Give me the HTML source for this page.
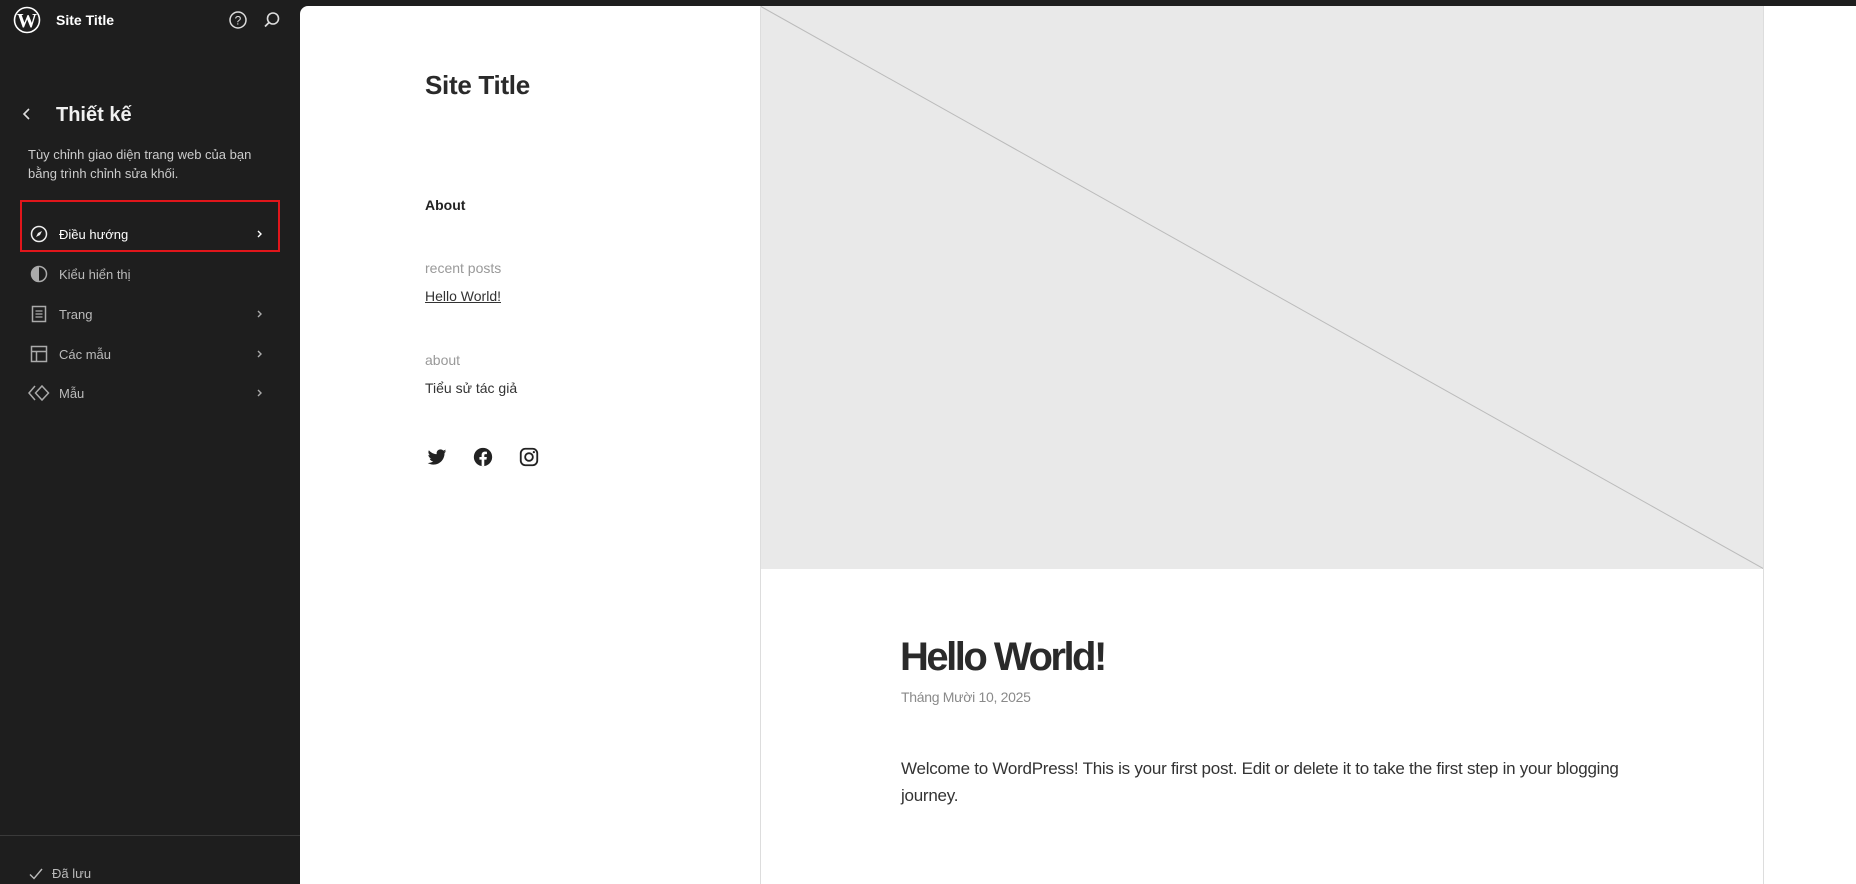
<!DOCTYPE html>
<html><head><meta charset="utf-8"><style>
*{margin:0;padding:0;box-sizing:border-box}
body{width:1856px;height:884px;overflow:hidden;background:#1e1e1e;font-family:"Liberation Sans","Noto Sans CJK SC",sans-serif;position:relative}
.a{position:absolute;white-space:nowrap;line-height:20px}
.frame{position:absolute;left:300px;top:6px;width:1556px;height:878px;background:#fff;border-top-left-radius:8px;overflow:hidden}
.mi{font-size:13px;color:#bbb}
.chev{position:absolute;left:255px}
</style></head><body>
<svg class="a" style="left:13px;top:6px" width="28" height="28" viewBox="0 0 28 28"><circle cx="14" cy="14" r="12.5" fill="none" stroke="#fff" stroke-width="1.6"/><text x="14" y="21" text-anchor="middle" font-family="Liberation Serif" font-weight="bold" font-size="20" fill="#fff">W</text></svg>
<div class="a" style="left:56px;top:10px;font-size:14px;font-weight:bold;color:#fff">Site Title</div>
<svg class="a" style="left:228px;top:10px" width="20" height="20" viewBox="0 0 20 20"><circle cx="10" cy="10" r="8" fill="none" stroke="#ddd" stroke-width="1.5"/><text x="10" y="14.5" text-anchor="middle" font-size="12" font-family="Liberation Sans" fill="#ddd">?</text></svg>
<svg class="a" style="left:262px;top:10px" width="20" height="20" viewBox="0 0 20 20"><circle cx="11" cy="8.5" r="5.5" fill="none" stroke="#ddd" stroke-width="1.6"/><path d="M7 12.5 L3 16.5" stroke="#ddd" stroke-width="1.8"/></svg>
<svg class="a" style="left:20px;top:106px" width="14" height="16" viewBox="0 0 14 16"><path d="M9 3 L4 8 L9 13" fill="none" stroke="#ddd" stroke-width="1.6"/></svg>
<div class="a" style="left:56px;top:103px;font-size:20px;line-height:24px;font-weight:bold;color:#f0f0f0">Thiết kế</div>
<div class="a" style="left:28px;top:145px;font-size:13px;line-height:19px;color:#ccc">Tùy chỉnh giao diện trang web của bạn<br>bằng trình chỉnh sửa khối.</div>
<div class="a" style="left:20px;top:200px;width:260px;height:52px;border:2px solid #e0161b"></div>
<svg class="a" style="left:30px;top:225px" width="18" height="18" viewBox="0 0 18 18"><circle cx="9" cy="9" r="7.5" fill="none" stroke="#eee" stroke-width="1.5"/><path d="M6 12 L8 8 L12 6 L10 10 Z" fill="#eee"/></svg>
<div class="a" style="left:59px;top:225px;font-size:13px;color:#fff">Điều hướng</div>
<svg class="a chev" style="top:228px" width="10" height="12" viewBox="0 0 10 12"><path d="M3 3 L6 6 L3 9" fill="none" stroke="#fff" stroke-width="1.4"/></svg>
<svg class="a" style="left:30px;top:265px" width="18" height="18" viewBox="0 0 18 18"><circle cx="9" cy="9" r="7.5" fill="none" stroke="#aaa" stroke-width="1.5"/><path d="M9 1.5 A7.5 7.5 0 0 0 9 16.5 Z" fill="#aaa"/></svg>
<div class="a mi" style="left:59px;top:265px">Kiểu hiển thị</div>
<svg class="a" style="left:30px;top:305px" width="18" height="18" viewBox="0 0 18 18"><rect x="2.5" y="1.5" width="13" height="15" fill="none" stroke="#aaa" stroke-width="1.5"/><path d="M5.5 6h7M5.5 9h7M5.5 12h7" stroke="#aaa" stroke-width="1.3"/></svg>
<div class="a mi" style="left:59px;top:305px">Trang</div>
<svg class="a chev" style="top:308px" width="10" height="12" viewBox="0 0 10 12"><path d="M3 3 L6 6 L3 9" fill="none" stroke="#aaa" stroke-width="1.4"/></svg>
<svg class="a" style="left:30px;top:345px" width="18" height="18" viewBox="0 0 18 18"><rect x="1.5" y="1.5" width="15" height="15" fill="none" stroke="#aaa" stroke-width="1.5"/><path d="M1.5 6.5h15M6.5 6.5v10" stroke="#aaa" stroke-width="1.5"/></svg>
<div class="a mi" style="left:59px;top:345px">Các mẫu</div>
<svg class="a chev" style="top:348px" width="10" height="12" viewBox="0 0 10 12"><path d="M3 3 L6 6 L3 9" fill="none" stroke="#aaa" stroke-width="1.4"/></svg>
<svg class="a" style="left:28px;top:384px" width="22" height="18" viewBox="0 0 22 18"><path d="M7 2 L1 9 L7 16" fill="none" stroke="#aaa" stroke-width="1.5"/><path d="M14 2 L20.5 9 L14 16 L7.5 9 Z" fill="none" stroke="#aaa" stroke-width="1.5"/></svg>
<div class="a mi" style="left:59px;top:384px">Mẫu</div>
<svg class="a chev" style="top:387px" width="10" height="12" viewBox="0 0 10 12"><path d="M3 3 L6 6 L3 9" fill="none" stroke="#aaa" stroke-width="1.4"/></svg>
<div class="a" style="left:0;top:835px;width:300px;height:1px;background:#3a3a3a"></div>
<svg class="a" style="left:28px;top:866px" width="16" height="16" viewBox="0 0 16 16"><path d="M2 8.5 L6 12.5 L14 3" fill="none" stroke="#bbb" stroke-width="1.4"/></svg>
<div class="a" style="left:52px;top:864px;font-size:13px;color:#bbb">Đã lưu</div>

<div class="frame">
  <div class="a" style="left:460px;top:0;width:1004px;height:563px;background:#e9e9e9"></div>
  <svg class="a" style="left:460px;top:0" width="1004" height="563"><line x1="0" y1="0" x2="1004" y2="563" stroke="#bbb" stroke-width="1"/></svg>
  <div class="a" style="left:460px;top:0;width:1px;height:878px;background:#ddd"></div>
  <div class="a" style="left:1463px;top:0;width:1px;height:878px;background:#ddd"></div>

  <div class="a" style="left:125px;top:62px;font-size:26px;line-height:34px;font-weight:bold;color:#2a2a2a;letter-spacing:-0.3px">Site Title</div>
  <div class="a" style="left:125px;top:189px;font-size:14px;font-weight:bold;color:#222">About</div>
  <div class="a" style="left:125px;top:252px;font-size:14px;color:#999">recent posts</div>
  <div class="a" style="left:125px;top:280px;font-size:14px;color:#333;text-decoration:underline">Hello World!</div>
  <div class="a" style="left:125px;top:344px;font-size:14px;color:#999">about</div>
  <div class="a" style="left:125px;top:372px;font-size:14px;color:#333">Tiểu sử tác giả</div>
  <svg class="a" style="left:126px;top:440px" width="22" height="22" viewBox="0 0 24 24"><path fill="#222" d="M22.2 5.6c-.8.3-1.6.6-2.4.7.9-.5 1.5-1.4 1.800-2.3-.8.5-1.700.8-2.700 1-1.600-1.700-4.300-1.800-6-.2-1.100 1-1.600 2.600-1.200 4.100C8.4 8.8 5.3 7.2 3.2 4.6 2.1 6.5 2.7 8.9 4.5 10.1c-.6 0-1.300-.2-1.900-.5 0 2 1.400 3.700 3.300 4.100-.6.2-1.200.2-1.900.1.500 1.700 2.100 2.900 3.900 2.900-1.500 1.200-3.400 1.800-5.300 1.800-.3 0-.7 0-1-.1 1.900 1.200 4.200 1.900 6.500 1.900 7.800 0 12.100-6.500 12.100-12.100v-.6c.8-.6 1.500-1.300 2-2.100z"/></svg>
  <svg class="a" style="left:172px;top:440px" width="22" height="22" viewBox="0 0 24 24"><circle cx="12" cy="12" r="10" fill="#222"/><path fill="#fff" d="M13.4 22v-7.2h2.4l.4-2.8h-2.8v-1.8c0-.8.2-1.4 1.4-1.4h1.5V6.3c-.3 0-1.1-.1-2.2-.1-2.2 0-3.6 1.3-3.6 3.7V12H8.1v2.8h2.4V22z"/></svg>
  <svg class="a" style="left:218px;top:440px" width="22" height="22" viewBox="0 0 24 24"><rect x="3" y="3" width="18" height="18" rx="5" fill="none" stroke="#222" stroke-width="2"/><circle cx="12" cy="12" r="4.2" fill="none" stroke="#222" stroke-width="2"/><circle cx="17.3" cy="6.7" r="1.2" fill="#222"/></svg>

  <div class="a" style="left:600px;top:626px;font-size:40px;line-height:50px;font-weight:bold;color:#2a2a2a;letter-spacing:-2.5px">Hello World!</div>
  <div class="a" style="left:601px;top:681px;font-size:14px;color:#8a8a8a;letter-spacing:-0.3px">Tháng Mười 10, 2025</div>
  <div class="a" style="left:601px;top:749px;font-size:17px;line-height:27px;color:#333;letter-spacing:-0.25px">Welcome to WordPress! This is your first post. Edit or delete it to take the first step in your blogging<br>journey.</div>
</div>
</body></html>
